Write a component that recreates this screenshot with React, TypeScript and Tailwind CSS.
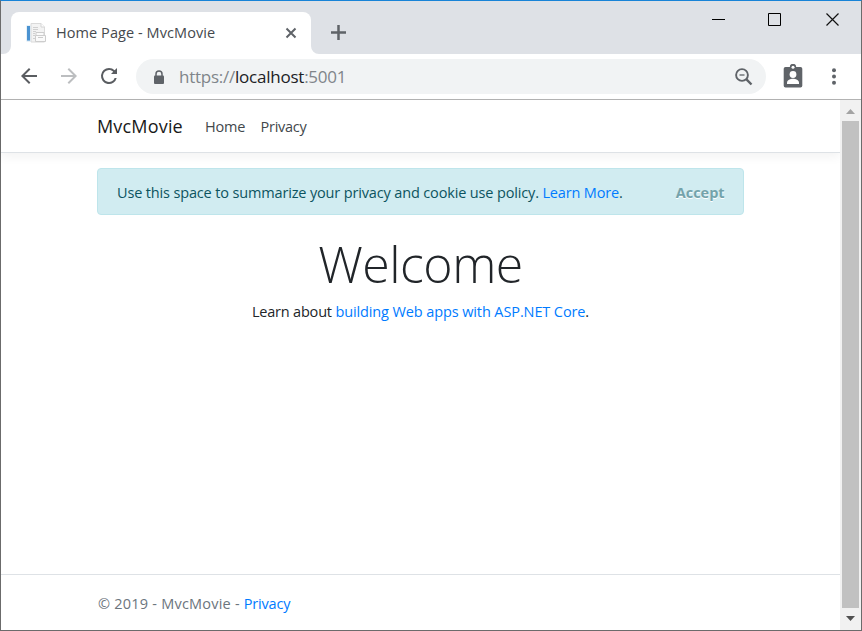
import type { ReactNode } from 'react';

function TitleBar() {
  return (
    <div className="flex h-[53px] bg-[#dee1e6]">
      <div className="relative mt-[11px] ml-[10px] flex h-[42px] w-[300px] items-center rounded-t-[8px] bg-white pl-[15px]">
        <svg className="absolute bottom-0 -left-[8px]" width="8" height="8"><path d="M8 0v8H0a8 8 0 0 0 8-8z" fill="#fff" /></svg>
        <svg className="absolute -right-[8px] bottom-0" width="8" height="8"><path d="M0 0v8h8a8 8 0 0 1-8-8z" fill="#fff" /></svg>
        <svg className="shrink-0" width="20" height="20" viewBox="0 0 20 20">
          <path d="M5 .5h10l3.500 3.500v15H5z" fill="#f3f3f3" stroke="#dadada" />
          <path d="M15 .5v3.500h3.500" fill="#fff" stroke="#d4d4d4" />
          <path d="M.5 2.500h4v16h-4z" fill="#cfe2f1" />
          <path d="M1 3h3v14.500H1z" fill="#4b93d1" />
          <path d="M7 4.500h5M7 6.500h5M7 8.500h3M7 10.500h2M7 12.500h2M7 15.500h2" stroke="#d0d0d0" />
          <path d="M10 9.500h8v3h-8zM9.500 12.500h10v6h-10z" fill="#fafafa" stroke="#cdcdcd" />
          <path d="M12 14.500h5" stroke="#ccc" />
        </svg>
        <span className="ml-[10px] text-[14.500px] tracking-[0.070px] whitespace-nowrap text-[#45494d]">Home Page - MvcMovie</span>
        <svg className="absolute top-[15px] left-[274px]" width="12" height="12" viewBox="0 0 12 12" stroke="#5f6368" strokeWidth="2"><path d="M1.500 1.500l9 9M10.500 1.500l-9 9" /></svg>
      </div>
      <svg className="mt-[24px] ml-[20px]" width="15" height="15" viewBox="0 0 15 15" stroke="#5f6368" strokeWidth="2.500"><path d="M7.500 0v15M0 7.500h15" /></svg>
      <div className="mt-[12px] mr-[22px] ml-auto flex gap-[43px]">
        <svg width="13" height="13"><path d="M0 6.500h13" stroke="#000" /></svg>
        <svg width="13" height="13"><path d="M.5.5h12v12H.5z" fill="none" stroke="#000" /></svg>
        <svg className="ml-[2px]" width="13" height="13"><path d="M.5.5l12 12M12.500.5l-12 12" stroke="#111" strokeWidth="1.200" /></svg>
      </div>
    </div>
  );
}

function Toolbar() {
  return (
    <div className="flex h-[46px] items-center border-b border-[#b3b3b3] bg-white pl-[16px]">
      <svg className="mb-[2px]" width="24" height="24" viewBox="0 0 24 24" fill="#5a5d61"><path d="M20 11H7.830l5.590-5.590L12 4l-8 8 8 8 1.410-1.410L7.830 13H20v-2z" /></svg>
      <svg className="mb-[2px] ml-[16px]" width="24" height="24" viewBox="0 0 24 24" fill="#bcbec0"><path d="M12 4l-1.410 1.410L16.170 11H4v2h12.170l-5.580 5.590L12 20l8-8z" /></svg>
      <svg className="mb-[2px] ml-[16px]" width="24" height="24" viewBox="0 0 24 24" fill="#5a5d61"><path d="M17.650 6.350A7.960 7.960 0 0 0 12 4a8 8 0 1 0 7.730 10h-2.080A6 6 0 1 1 12 6c1.660 0 3.140.69 4.220 1.780L14 10h6V4z" /></svg>
      <div className="ml-[15px] flex h-[35px] w-[630px] items-center rounded-full bg-[#f1f3f4] pr-[12px] pl-[17px]">
        <svg className="mt-px" width="12" height="15" viewBox="0 0 12 15"><path d="M3 6V4a3 3 0 0 1 6 0v2" fill="none" stroke="#5f6368" strokeWidth="1.500" /><rect x="1" y="5.500" width="10" height="8.500" rx="1" fill="#5f6368" /></svg>
        <span className="ml-[14px] text-[17px] tracking-[-0.240px] text-[#80858a]">https://<span className="text-[#202124]">localhost</span>:5001</span>
        <svg className="ml-auto" width="20" height="20" viewBox="0 0 20 20" fill="none" stroke="#5f6368"><circle cx="8" cy="8" r="5.900" strokeWidth="1.900" /><path d="M12.200 12.200l5.300 5.300" strokeWidth="2.400" /><path d="M5.500 8h5" strokeWidth="1.300" /></svg>
      </div>
      <svg className="mb-[2px] ml-[17px]" width="20" height="24" viewBox="0 0 20 24"><path d="M2.500 3h4.300a3.200 3.200 0 0 1 6.400 0h4.300A1.800 1.800 0 0 1 19.300 4.800v17a1.800 1.800 0 0 1-1.800 1.800h-15A1.800 1.800 0 0 1 .7 21.800v-17A1.800 1.800 0 0 1 2.500 3z" fill="#5f6368" /><circle cx="10" cy="3.200" r="1.500" fill="#fff" /><circle cx="10" cy="10.500" r="3.400" fill="#fff" /><path d="M4 20v-1.500c0-2.300 3.500-3.700 6-3.700s6 1.400 6 3.700V20z" fill="#fff" /></svg>
      <svg className="mb-px ml-[29px]" width="5" height="17" viewBox="0 0 5 17" fill="#5f6368"><circle cx="2" cy="2.300" r="2" /><circle cx="2" cy="8.500" r="2" /><circle cx="2" cy="14.700" r="2" /></svg>
    </div>
  );
}

function Link({ children }: { children: ReactNode }) {
  return <a className="text-[#007bff]">{children}</a>;
}

function Scrollbar() {
  return (
    <div className="flex w-[21px] flex-col items-center bg-[#f1f1f1]">
      <svg width="9" height="21"><path d="M0 14l4.500-5L9 14z" fill="#a3a3a3" /></svg>
      <div className="w-[17px] flex-1 bg-[#c1c1c1]" />
      <svg width="9" height="22"><path d="M0 8l4.500 5L9 8z" fill="#505050" /></svg>
    </div>
  );
}

export default function App() {
  return (
    <div className="flex h-[631px] w-[862px] flex-col border border-[#6b6b6b] border-t-[#1883d7] bg-white font-['Open_Sans','Noto_Sans',sans-serif] text-[14.500px] text-[#212529]">
      <TitleBar />
      <Toolbar />
      <div className="flex min-h-0 flex-1">
        <div className="flex flex-1 flex-col">
          <nav className="flex h-[53px] items-center border-b border-[#dee2e6] pl-[96px] whitespace-nowrap shadow-[0_4px_10px_rgba(0,0,0,0.050)]">
            <span className="w-[108px] text-[18px] tracking-[0.180px] text-[#191919]">MvcMovie</span>
            <span className="w-[55.500px] pt-[2px] tracking-[-0.200px] text-[#42474b]">Home</span>
            <span className="pt-[2px] tracking-[-0.250px] text-[#42474b]">Privacy</span>
          </nav>
          <main className="flex flex-1 flex-col items-center pt-[15px]">
            <div className="flex h-[47px] w-[647px] items-center justify-between rounded-[4px] border border-[#bee5eb] bg-[#d1ecf1] pt-[2px] pr-[18.500px] pl-[19px] whitespace-nowrap text-[#0c5460]">
              <span className="tracking-[-0.150px]">Use this space to summarize your privacy and cookie use policy. <Link>Learn More</Link>.</span>
              <span className="font-bold tracking-[-0.050px] text-[#74a3ab] [text-shadow:0_1px_0_#fff]">Accept</span>
            </div>
            <h1 className="mt-[15px] text-[50px] leading-[68px] font-light tracking-[-0.500px]">Welcome</h1>
            <p className="mt-[3px] leading-[22px] tracking-[-0.110px]"><span className="tracking-[-0.200px]">Learn about </span><Link>building Web apps with ASP.NET Core</Link>.</p>
          </main>
          <footer className="flex h-[56px] items-center border-t border-[#dee2e6] pt-[3px] pl-[97px] tracking-[0.220px] text-[#6c757d]">
            <span>© 2019 - MvcMovie - <span className="tracking-[-0.200px]"><Link>Privacy</Link></span></span>
          </footer>
        </div>
        <Scrollbar />
      </div>
    </div>
  );
}
